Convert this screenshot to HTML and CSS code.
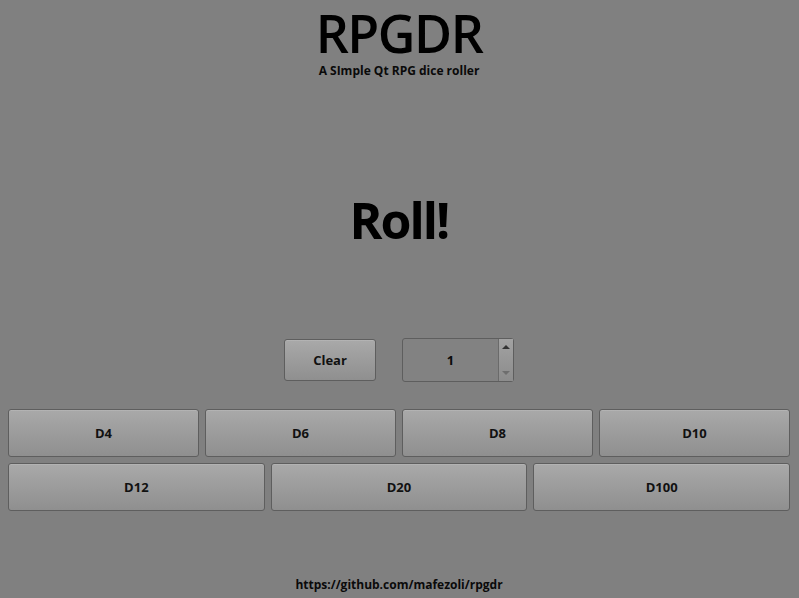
FILE: index.html
```html
<!DOCTYPE html>
<html>
<head>
<meta charset="utf-8">
<link rel="stylesheet" href="styles.css">
</head>
<body>
<div class="app">
  <header class="head">
    <h1 class="title">RPGDR</h1>
    <div class="subtitle">A SImple Qt RPG dice roller</div>
  </header>
  <div class="result">Roll!</div>
  <div class="controls">
    <button class="btn clear">Clear</button>
    <div class="spin">
      <div class="spin-value">1</div>
      <div class="spin-arrows">
        <span class="arrow up"></span>
        <span class="arrow down"></span>
      </div>
    </div>
  </div>
  <div class="row four">
    <button class="btn die">D4</button>
    <button class="btn die">D6</button>
    <button class="btn die">D8</button>
    <button class="btn die">D10</button>
  </div>
  <div class="row three">
    <button class="btn die">D12</button>
    <button class="btn die">D20</button>
    <button class="btn die">D100</button>
  </div>
  <footer class="foot">https://github.com/mafezoli/rpgdr</footer>
</div>
</body>
</html>
```
FILE: styles.css
```css
html, body {
  margin: 0;
  padding: 0;
  background: #808080;
  width: 799px;
  height: 598px;
  overflow: hidden;
  font-family: "Open Sans", "DejaVu Sans", sans-serif;
  color: #0a0a0a;
}
.app {
  display: flex;
  flex-direction: column;
  padding: 0 9px 0 8px;
  height: 598px;
  box-sizing: border-box;
}
.head {
  display: flex;
  flex-direction: column;
  align-items: center;
}
.title {
  margin: 0;
  margin-top: 4px;
  font-size: 52px;
  line-height: 58px;
  font-weight: 600;
  letter-spacing: -1.5px;
  color: #000;
}
.subtitle {
  font-size: 12px;
  font-weight: 700;
  line-height: 16px;
  margin-top: 1px;
}
.result {
  text-align: center;
  font-size: 50px;
  font-weight: 700;
  line-height: 60px;
  margin-top: 111px;
  letter-spacing: -2px;
  color: #000;
}
.controls {
  display: flex;
  justify-content: center;
  gap: 26px;
  margin-top: 88px;
}
.btn {
  font-family: "Open Sans", "DejaVu Sans", sans-serif;
  font-weight: 700;
  font-size: 13px;
  color: #111;
  background: linear-gradient(to bottom, #a9a9a9, #8f8f8f);
  border: 1px solid #5e5e5e;
  border-radius: 3px;
  padding: 0;
  box-shadow: inset 0 1px 0 rgba(255,255,255,0.12);
}
.clear {
  width: 92px;
  height: 42px;
  margin-top: 1px;
}
.spin {
  width: 112px;
  height: 44px;
  box-sizing: border-box;
  border: 1px solid #5e5e5e;
  border-radius: 3px;
  display: flex;
  background: #828282;
}
.spin-value {
  flex: 1;
  display: flex;
  align-items: center;
  justify-content: center;
  font-weight: 700;
  font-size: 13px;
}
.spin-arrows {
  width: 14px;
  border-left: 1px solid #6a6a6a;
  display: flex;
  flex-direction: column;
  justify-content: space-between;
  align-items: center;
  padding: 6px 0 6px;
  background: linear-gradient(to bottom, #a2a2a2, #8c8c8c);
}
.arrow {
  width: 0;
  height: 0;
  border-left: 4px solid transparent;
  border-right: 4px solid transparent;
}
.arrow.up { border-bottom: 4px solid #333; }
.arrow.down { border-top: 4px solid #6e6e6e; }
.row {
  display: grid;
  gap: 6px;
}
.row.four {
  grid-template-columns: repeat(4, 1fr);
  margin-top: 27px;
}
.row.three {
  grid-template-columns: repeat(3, 1fr);
  margin-top: 6px;
}
.die {
  height: 48px;
}
.foot {
  text-align: center;
  font-weight: 700;
  font-size: 12px;
  margin-top: auto;
  line-height: 16px;
  margin-bottom: 5px;
}
```
